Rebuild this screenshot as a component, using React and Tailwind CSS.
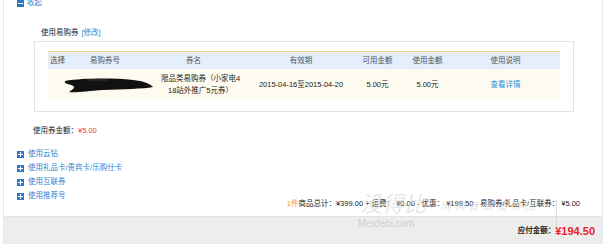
import React from "react";

const FONT = { fontFamily: '"Liberation Sans", "Noto Sans CJK SC", sans-serif' };

function PlusIcon() {
  return (
    <span className="w-[7px] h-[7px] bg-[#2b78c9] relative inline-block shrink-0">
      <span className="absolute left-[1px] top-[3px] w-[5px] h-[1px] bg-white" />
      <span className="absolute left-[3px] top-[1px] w-[1px] h-[5px] bg-white" />
    </span>
  );
}

function MinusIcon() {
  return (
    <span className="w-[7px] h-[7px] bg-[#2b78c9] relative inline-block shrink-0">
      <span className="absolute left-[1px] top-[3px] w-[5px] h-[1px] bg-white" />
    </span>
  );
}

export default function App() {
  return (
    <div className="w-[610px] h-[244px] bg-white relative overflow-hidden text-[7.5px] leading-none text-[#222]" style={FONT}>
      <div className="ml-[3px] w-[600px] h-[244px] border-l border-r border-[#e8e8e8] flex flex-col">
        <div className="h-[216px] flex flex-col">
          <div className="flex items-center gap-[3px] pl-[13px] -mt-[1px] h-[8px]">
            <MinusIcon />
            <span className="text-[#2f84d4]">收起</span>
          </div>
          <div className="mt-[22px] pl-[37px] flex items-center h-[8px]">
            <span className="text-[#222]">使用易购券</span>
            <span className="text-[#2f84d4] ml-[3px]">[修改]</span>
          </div>
          <div className="ml-[30px] mt-[4px] w-[540px] h-[71px] border border-[#e3e3e3] bg-white pt-[9px] pl-[13px]">
            <div className="w-[512px]">
              <div className="h-[18px] bg-[#e4eefc] border-t border-[#f1d58d] flex items-center text-[#555]">
                <div className="w-[33px] pl-[2px]">选择</div>
                <div className="w-[68px] pl-[9px]">易购券号</div>
                <div className="w-[102px] pl-[37px]">券名</div>
                <div className="w-[100px] text-center">有效期</div>
                <div className="w-[53px] text-center">可用金额</div>
                <div className="w-[47px] text-center">使用金额</div>
                <div className="w-[109px] text-center">使用说明</div>
              </div>
              <div className="h-[32px] bg-[#fdfbef] flex items-center text-[#222]">
                <div className="w-[33px]" />
                <div className="w-[68px] relative h-full">
                  <svg className="absolute left-[-18px] top-[8px]" width="92" height="18" viewBox="0 0 92 18">
                    <path d="M2 4 C 20 1, 50 1, 70 3 C 80 4, 88 7, 90 10 C 80 12, 60 12, 40 13 C 25 14, 12 16, 6 15 C 10 12, 14 10, 8 8 C 4 7, 1 6, 2 4 Z" fill="#111" />
                    <path d="M24 3 L 45 3" stroke="#555" strokeWidth="0.6" />
                  </svg>
                </div>
                <div className="w-[102px] pl-[1px] text-center leading-[12px]">
                  <div className="inline-block text-center">限品类易购券（小家电4<br />18站外推广5元券）</div>
                </div>
                <div className="w-[100px] text-center whitespace-nowrap">2015-04-16至2015-04-20</div>
                <div className="w-[53px] text-center">5.00元</div>
                <div className="w-[47px] text-center">5.00元</div>
                <div className="w-[109px] text-center text-[#2d8fd8]">查看详情</div>
              </div>
            </div>
          </div>
          <div className="mt-[15px] pl-[29px] flex items-center h-[8px]">
            <span>使用券金额：</span>
            <span className="text-[#ee3a4a]">¥5.00</span>
          </div>
          <div className="mt-[15px] pl-[13px] flex flex-col gap-[6px] text-[#2f84d4]">
            {["使用云钻", "使用礼品卡/贵宾卡/乐购仕卡", "使用互联券", "使用推荐号"].map((t) => (
              <div key={t} className="flex items-center gap-[4px] h-[8px]">
                <PlusIcon />
                <span>{t}</span>
              </div>
            ))}
          </div>
          <div className="pr-[22px] flex justify-end items-center h-[8px] whitespace-nowrap text-[#222]">
            <span className="text-[#f39a2b]">1件</span>
            <span>商品总计：¥399.00 + 运费： ¥0.00 - 优惠： ¥199.50 - 易购券/礼品卡/互联券： ¥5.00</span>
          </div>
        </div>
        <div className="flex-1 bg-[#ededed] border-t border-[#e2e2e2] flex justify-end items-center pr-[7px] pt-[1px]">
          <span className="font-bold text-[#222] text-[7.5px]">应付金额：</span>
          <span className="font-bold text-[#e8212b] text-[11px]">¥194.50</span>
        </div>
      </div>
      <div className="absolute left-[360px] top-[191px] text-[22px] text-[#d8d8d8]/60 italic" style={{ fontFamily: '"Noto Sans CJK SC", sans-serif' }}>没得比</div>
      <div className="absolute left-[556px] top-[200px] w-[1px] h-[26px] bg-[#cfcfcf]/70" />
      <div className="absolute left-[440px] top-[200px] text-[11px] tracking-[3px] text-[#d4d4d4]/60 italic" style={{ fontFamily: '"Noto Sans CJK SC", sans-serif' }}>网购有数没得比</div>
      <div className="absolute left-[358px] top-[219px] text-[10px] text-[#c8c8c8]/80" style={FONT}>Meidebi.com</div>
    </div>
  );
}
